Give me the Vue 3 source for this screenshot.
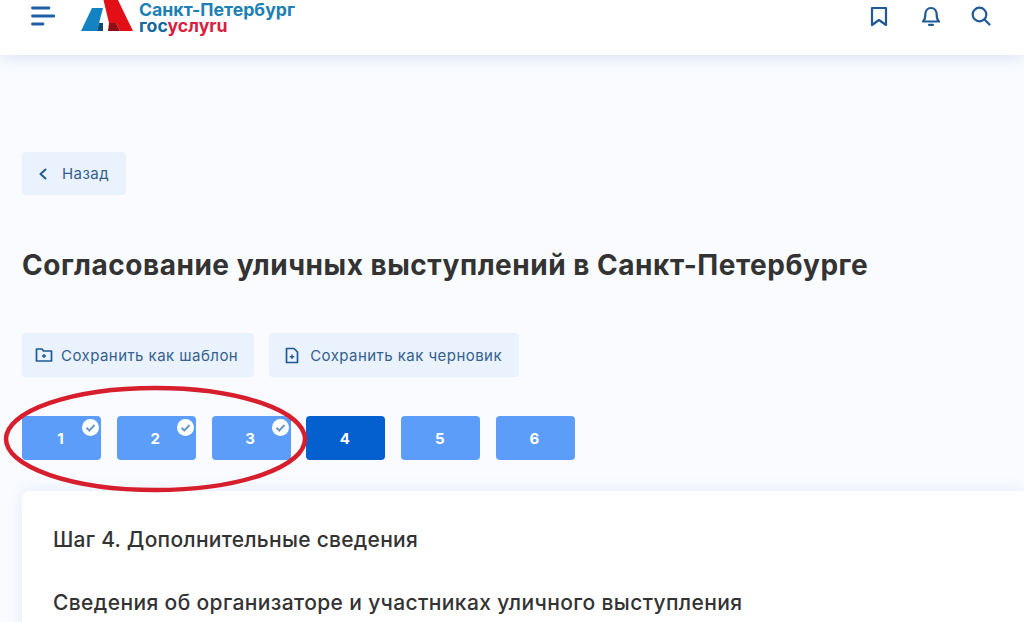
<template>
  <div class="page">
    <header class="header">
      <div class="header-left">
        <svg class="burger" width="24" height="20" viewBox="0 0 24 20">
          <path d="M1.500 2H18M1.500 10H23M1.500 18H12" stroke="#1f5fa5" stroke-width="2.800" stroke-linecap="round" fill="none" />
        </svg>
        <div class="logo">
          <svg width="53" height="32" viewBox="0 0 53 32">
            <polygon points="0,31 11,8 22,8 16,31" fill="#1383c2" />
            <polygon points="22,-2 36,-2 52,31 39,31 35,23 28,23" fill="#e30f17" />
            <polygon points="16,31 18,23 22,23 22,31" fill="#0c4a78" />
            <polygon points="27,31 28,23 35,23 39,31" fill="#8f0f14" />
          </svg>
          <div class="logo-text">
            <div class="logo-city">Санкт-Петербург</div>
            <div class="logo-gos">гос<span class="logo-red">услуru</span></div>
          </div>
        </div>
      </div>
      <div class="header-icons">
        <svg class="bookmark" width="18" height="21" viewBox="0 0 18 21">
          <path d="M2 2H16V19L9 14L2 19Z" fill="none" stroke="#1f5a96" stroke-width="2.200" stroke-linejoin="round" />
        </svg>
        <svg width="20" height="21" viewBox="0 0 20 21">
          <path d="M2 15.500C3.800 14 4.300 12 4.300 9C4.300 5 6.500 2 10 2C13.500 2 15.700 5 15.700 9C15.700 12 16.200 14 18 15.500Z" fill="none" stroke="#1f5a96" stroke-width="2.200" stroke-linejoin="round" />
          <path d="M8 18.800H12" stroke="#1f5a96" stroke-width="2.200" stroke-linecap="round" />
        </svg>
        <svg width="20" height="20" viewBox="0 0 20 20">
          <circle cx="8.500" cy="8.500" r="6.800" fill="none" stroke="#1f5a96" stroke-width="2.200" />
          <path d="M13.500 13.500L18.500 18.500" stroke="#1f5a96" stroke-width="2.200" stroke-linecap="round" />
        </svg>
      </div>
    </header>

    <main class="content">
      <button class="btn back">
        <svg width="10" height="12" viewBox="0 0 10 12">
          <path d="M7.500 1.500L2.500 6L7.500 10.500" fill="none" stroke="#1f5a96" stroke-width="2" stroke-linecap="round" stroke-linejoin="round" />
        </svg>
        Назад
      </button>

      <h1 class="title">Согласование уличных выступлений в Санкт-Петербурге</h1>

      <div class="actions">
        <button class="btn save-template">
          <svg width="18" height="16" viewBox="0 0 18 16">
            <path d="M1.500 2H7L8.500 4H16.500V14H1.500Z" fill="none" stroke="#1f5a96" stroke-width="1.700" stroke-linejoin="round" />
            <path d="M9 7V11M7 9H11" stroke="#1f5a96" stroke-width="1.400" />
          </svg>
          Сохранить как шаблон
        </button>
        <button class="btn save-draft">
          <svg width="14" height="17" viewBox="0 0 14 17">
            <path d="M1.500 1.500H9L12.500 5V15.500H1.500Z" fill="none" stroke="#1f5a96" stroke-width="1.700" stroke-linejoin="round" />
            <path d="M7 7.500V12M4.800 9.800H9.200" stroke="#1f5a96" stroke-width="1.400" />
          </svg>
          Сохранить как черновик
        </button>
      </div>

      <div class="steps">
        <div
          v-for="step in steps"
          :key="step"
          class="step"
          :class="{ current: step === 4 }"
        >
          {{ step }}
          <svg v-if="step < 4" class="done" width="17" height="17" viewBox="0 0 17 17">
            <circle cx="8.500" cy="8.500" r="8.500" fill="#fff" />
            <path d="M4.500 8.700L7.300 11.500L12.500 6" fill="none" stroke="#6d9ac9" stroke-width="2" />
          </svg>
        </div>
        <svg class="mark" width="310" height="112" viewBox="0 0 310 112">
          <ellipse cx="155.500" cy="56" rx="149.500" ry="51" fill="none" stroke="#d61e2c" stroke-width="4.500" />
        </svg>
      </div>

      <section class="card">
        <h2 class="card-title">Шаг 4. Дополнительные сведения</h2>
        <h3 class="card-sub">Сведения об организаторе и участниках уличного выступления</h3>
      </section>
    </main>
  </div>
</template>

<script setup>
const steps = [1, 2, 3, 4, 5, 6];
</script>

<style>
html, body {
  margin: 0;
  height: 622px;
  overflow: hidden;
}
</style>

<style scoped>
.page {
  height: 622px;
  overflow: hidden;
  background: #f9fbff;
  font-family: Inter, "Noto Sans", sans-serif;
}

.header {
  position: relative;
  height: 55px;
  box-sizing: border-box;
  padding: 0 33px 0 31px;
  display: flex;
  justify-content: space-between;
  background: #fff;
  box-shadow: 0 3px 14px rgba(150, 175, 215, 0.3);
}

.header-left {
  display: flex;
  gap: 26px;
  align-items: flex-start;
  overflow: hidden;
  height: 55px;
}

.burger {
  margin-top: 6px;
}

.logo {
  display: flex;
  gap: 5px;
}

.logo-text {
  font-weight: 700;
  font-size: 17.700px;
  line-height: 16px;
  color: #1c80b4;
  margin-top: 2px;
}

.logo-gos {
  color: #16699f;
}

.logo-red {
  color: #d81f3f;
}

.header-icons {
  display: flex;
  gap: 30px;
  margin-top: 6px;
  align-items: flex-start;
}

.bookmark {
  margin-right: 3px;
}

.content {
  padding: 97px 0 0 22px;
}

.btn {
  height: 44px;
  padding: 0 16px;
  display: inline-flex;
  align-items: center;
  gap: 8px;
  background: #e9f2fd;
  border: none;
  border-radius: 4px;
  color: #35608f;
  font-family: inherit;
  font-size: 15px;
  letter-spacing: 0.45px;
}

.back {
  height: 43px;
  gap: 14px;
  padding-right: 17px;
}

.save-template {
  padding-left: 13px;
}

.save-draft {
  gap: 11px;
  padding-right: 17px;
}

.title {
  margin: 53px 0 0;
  font-size: 28px;
  line-height: 34px;
  letter-spacing: 0.52px;
  font-weight: 700;
  color: #333;
}

.actions {
  display: flex;
  gap: 15px;
  margin-top: 51px;
}

.steps {
  position: relative;
  display: flex;
  gap: 15.800px;
  margin-top: 39px;
}

.step {
  position: relative;
  width: 79px;
  height: 44px;
  padding-right: 2px;
  box-sizing: border-box;
  display: flex;
  align-items: center;
  justify-content: center;
  background: #5c9dfa;
  border-radius: 4px;
  color: #fff;
  font-size: 15px;
  font-weight: 700;
}

.step.current {
  background: #0560cf;
}

.done {
  position: absolute;
  top: 3px;
  right: 2px;
}

.mark {
  position: absolute;
  left: -22px;
  top: -33px;
}

.card {
  margin-top: 31px;
  padding: 36px 31px;
  background: #fff;
  border-radius: 8px 0 0 0;
  box-shadow: 0 0 16px rgba(190, 205, 235, 0.35);
  color: #333;
}

.card-title,
.card-sub {
  margin: 0;
  font-size: 21px;
  line-height: 26px;
  letter-spacing: 0.27px;
  font-weight: 500;
}

.card-sub {
  margin-top: 37px;
  letter-spacing: 0.38px;
}
</style>
